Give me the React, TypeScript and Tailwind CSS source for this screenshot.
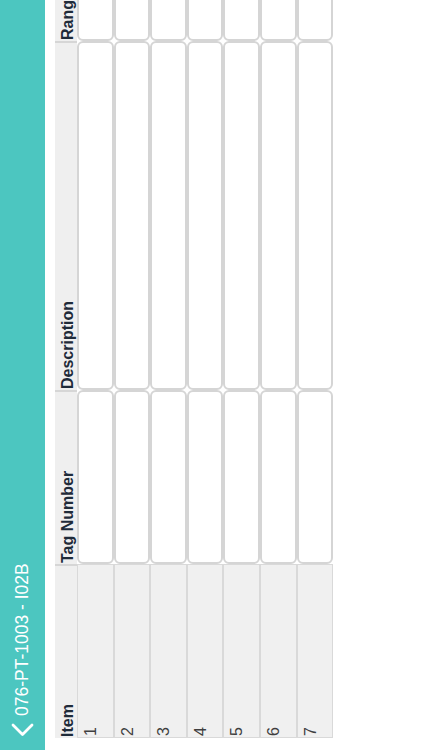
import React from 'react';

const rows = [1, 2, 3, 4, 5, 6, 7];

const columns = [
  { name: 'Item', width: 'w-[174px]' },
  { name: 'Tag Number', width: 'w-[174px]' },
  { name: 'Description', width: 'w-[349px]' },
  { name: 'Range', width: 'w-[120px]' },
];

const InputCell = ({ width }: { width: string }) => (
  <div className={`${width} h-full shrink-0 bg-white border-2 border-[#d5d5d5] rounded-[6px]`} />
);

export default function App() {
  return (
    <div className="w-[422px] h-[750px] overflow-hidden bg-white">
      {/* landscape screen, turned a quarter to the left */}
      <div
        className="w-[750px] h-[422px] origin-top-left translate-y-[750px] -rotate-90 bg-white flex flex-col"
        style={{ fontFamily: '"Liberation Sans", Arial, sans-serif' }}
      >
        {/* Nav Bar */}
        <header className="h-[45px] shrink-0 bg-[#4cc6c0] flex items-center pl-[13px] gap-[7px] text-white">
          <svg width="14" height="23" viewBox="0 0 14 23" fill="none">
            <polyline
              points="12,2 2.5,11.5 12,21"
              stroke="white"
              strokeWidth="2.8"
              strokeLinecap="round"
              strokeLinejoin="round"
            />
          </svg>
          <span className="text-[17.5px] leading-none">076-PT-1003 - I02B</span>
        </header>

        {/* Table */}
        <div className="mt-[10px] ml-[12px] flex flex-col overflow-hidden">
          <div className="h-[22px] flex bg-[#efefef]">
            {columns.map((col) => (
              <div
                key={col.name}
                className={`${col.width} shrink-0 h-full flex items-end pl-[1px] border-r-2 border-[#d6d6d6] text-[16px] leading-[19px] font-bold text-[#1f2b3a] whitespace-nowrap overflow-hidden`}
              >
                {col.name}
              </div>
            ))}
          </div>
          {rows.map((n) => (
            <div key={n} className="h-[36.6px] flex">
              <div className="w-[174px] shrink-0 h-full bg-[#f0f0f0] border-[1.5px] border-[#d9d9d9] pl-[1px] pt-[5px] text-[16px] leading-none text-[#3f3f3f]">
                {n}
              </div>
              <InputCell width="w-[174px]" />
              <InputCell width="w-[349px]" />
              <InputCell width="w-[120px]" />
            </div>
          ))}
        </div>
      </div>
    </div>
  );
}
